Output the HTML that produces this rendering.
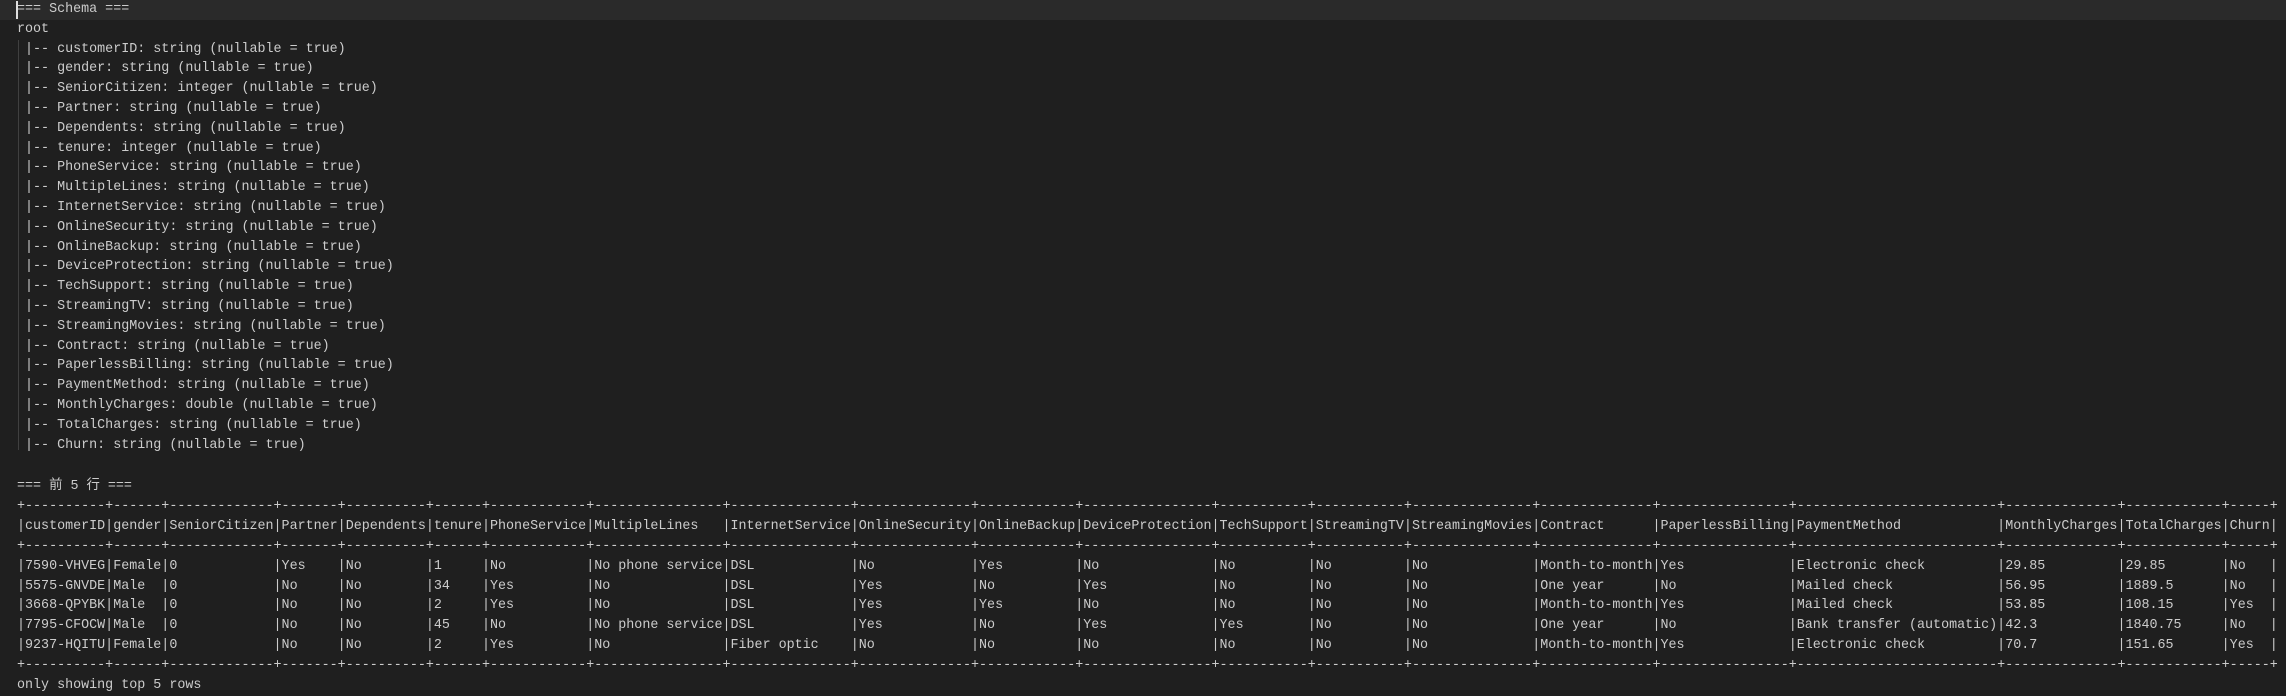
<!DOCTYPE html>
<html><head><meta charset="utf-8"><style>
html,body{margin:0;padding:0;background:#1f1f1f;width:2286px;height:683px;overflow:hidden}
pre{margin:0;font-family:"Liberation Mono","Noto Sans CJK SC",monospace;font-size:13.36px;line-height:19.8px;color:#cccccc;white-space:pre}
.hl{position:absolute;left:0;top:0;width:2286px;height:20px;background:#2a2a2a}
.cur{position:absolute;left:16px;top:1px;width:2px;height:18px;background:#e0e0e0}
.guide{position:absolute;left:18px;top:40px;width:1px;height:410px;background:#404040}
#a{position:absolute;left:17px;top:0}
#b{position:absolute;left:17px;top:477px;line-height:19.9px}
</style></head><body>
<div class="hl"></div><div class="guide"></div>
<pre id="a">=== Schema ===
root
 |-- customerID: string (nullable = true)
 |-- gender: string (nullable = true)
 |-- SeniorCitizen: integer (nullable = true)
 |-- Partner: string (nullable = true)
 |-- Dependents: string (nullable = true)
 |-- tenure: integer (nullable = true)
 |-- PhoneService: string (nullable = true)
 |-- MultipleLines: string (nullable = true)
 |-- InternetService: string (nullable = true)
 |-- OnlineSecurity: string (nullable = true)
 |-- OnlineBackup: string (nullable = true)
 |-- DeviceProtection: string (nullable = true)
 |-- TechSupport: string (nullable = true)
 |-- StreamingTV: string (nullable = true)
 |-- StreamingMovies: string (nullable = true)
 |-- Contract: string (nullable = true)
 |-- PaperlessBilling: string (nullable = true)
 |-- PaymentMethod: string (nullable = true)
 |-- MonthlyCharges: double (nullable = true)
 |-- TotalCharges: string (nullable = true)
 |-- Churn: string (nullable = true)</pre>
<div class="cur"></div>
<pre id="b">=== 前 5 行 ===
+----------+------+-------------+-------+----------+------+------------+----------------+---------------+--------------+------------+----------------+-----------+-----------+---------------+--------------+----------------+-------------------------+--------------+------------+-----+
|customerID|gender|SeniorCitizen|Partner|Dependents|tenure|PhoneService|MultipleLines   |InternetService|OnlineSecurity|OnlineBackup|DeviceProtection|TechSupport|StreamingTV|StreamingMovies|Contract      |PaperlessBilling|PaymentMethod            |MonthlyCharges|TotalCharges|Churn|
+----------+------+-------------+-------+----------+------+------------+----------------+---------------+--------------+------------+----------------+-----------+-----------+---------------+--------------+----------------+-------------------------+--------------+------------+-----+
|7590-VHVEG|Female|0            |Yes    |No        |1     |No          |No phone service|DSL            |No            |Yes         |No              |No         |No         |No             |Month-to-month|Yes             |Electronic check         |29.85         |29.85       |No   |
|5575-GNVDE|Male  |0            |No     |No        |34    |Yes         |No              |DSL            |Yes           |No          |Yes             |No         |No         |No             |One year      |No              |Mailed check             |56.95         |1889.5      |No   |
|3668-QPYBK|Male  |0            |No     |No        |2     |Yes         |No              |DSL            |Yes           |Yes         |No              |No         |No         |No             |Month-to-month|Yes             |Mailed check             |53.85         |108.15      |Yes  |
|7795-CFOCW|Male  |0            |No     |No        |45    |No          |No phone service|DSL            |Yes           |No          |Yes             |Yes        |No         |No             |One year      |No              |Bank transfer (automatic)|42.3          |1840.75     |No   |
|9237-HQITU|Female|0            |No     |No        |2     |Yes         |No              |Fiber optic    |No            |No          |No              |No         |No         |No             |Month-to-month|Yes             |Electronic check         |70.7          |151.65      |Yes  |
+----------+------+-------------+-------+----------+------+------------+----------------+---------------+--------------+------------+----------------+-----------+-----------+---------------+--------------+----------------+-------------------------+--------------+------------+-----+
only showing top 5 rows</pre>
</body></html>
